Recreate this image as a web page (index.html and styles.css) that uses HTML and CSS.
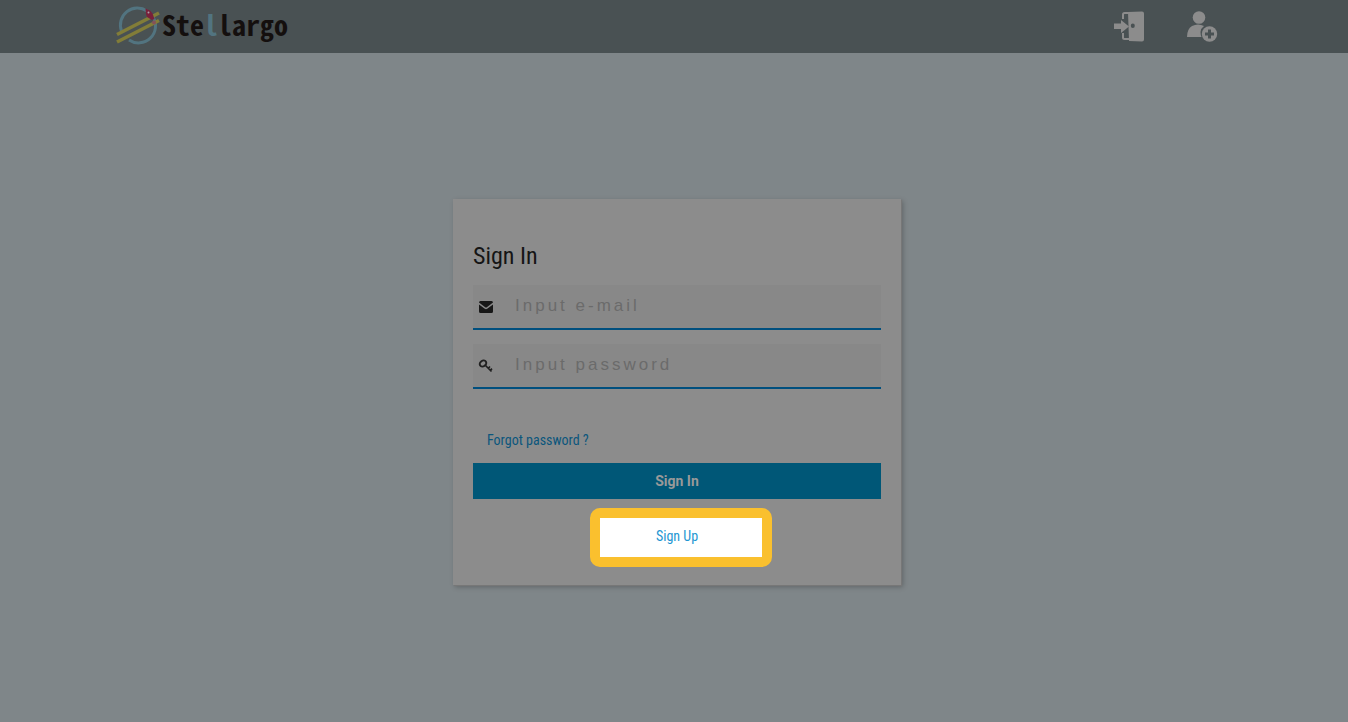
FILE: index.html
```html
<!DOCTYPE html>
<html lang="en">
<head>
<meta charset="utf-8">
<title>Stellargo - Sign In</title>
<link rel="stylesheet" href="styles.css">
</head>
<body>
<header class="topbar">
  <div class="topbar-inner">
    <a class="brand" href="#">
      <svg class="brand-mark" viewBox="0 0 46 40" aria-hidden="true">
        <path d="M5.500 25A17 17 0 0 1 31 5M37 11A17 17 0 0 1 13 34" fill="none" stroke="#527480" stroke-width="3"/>
        <path d="M1 28.500L43 7M1 36L43 14.500" stroke="#827d38" stroke-width="3.600"/>
        <path d="M29.500 2.500l4.500 2 2.500 3 2 5.500-2.500 1-5-3-1-3z" fill="#78203b"/>
        <circle cx="32.500" cy="6.500" r="1" fill="#aaa0a6"/>
        <circle cx="38" cy="16.500" r="2" fill="#84515a"/>
      </svg>
      <span class="brand-name">Ste<span class="brand-accent">l</span>largo</span>
    </a>
    <nav class="actions">
      <a class="action" href="#" aria-label="Sign in">
        <svg viewBox="0 0 32 32" aria-hidden="true">
          <path d="M16 3h-4.500q-1.500 0-1.500 1.500V9M10 23v4.500q0 1.500 1.500 1.500H16" fill="none" stroke="#8c8c8c" stroke-width="2"/>
          <path fill="#8c8c8c" fill-rule="evenodd" d="M15 2l14-.500q2 0 2 2v26q0 2-2 2L16 31zM19.800 13.500a2 2.300 0 1 0 0 4.600 2 2.300 0 1 0 0-4.600z"/>
          <path d="M1 13.500h7V10l8 6.500L8 23v-4H1z" fill="#8c8c8c"/>
        </svg>
      </a>
      <a class="action" href="#" aria-label="Sign up">
        <svg viewBox="0 0 32 32" aria-hidden="true">
          <circle cx="13" cy="7.500" r="6.300" fill="#8c8c8c"/>
          <path d="M1 27q0-8 5-11 6-3 12 0-3 2-3.500 6 0 3 1 5z" fill="#8c8c8c"/>
          <circle cx="23.500" cy="24" r="7.700" fill="#8c8c8c"/>
          <path d="M23.500 19.500v9M19 24h9" stroke="#495153" stroke-width="3"/>
        </svg>
      </a>
    </nav>
  </div>
</header>
<main class="page">
  <form class="card">
    <h1 class="title">Sign In</h1>
    <label class="field">
      <svg class="field-icon" viewBox="0 0 16 16" aria-hidden="true">
        <path d="M1 3.500Q1 2 2.500 2h11Q15 2 15 3.500L8.500 8.400q-.500.400-1 0zM1 5.500l5.800 4.300q1.200.900 2.400 0L15 5.500v7q0 1.500-1.500 1.500h-11Q1 14 1 12.500z" fill="#171717"/>
      </svg>
      <input class="input" type="email" placeholder="Input e-mail" aria-label="E-mail">
    </label>
    <label class="field">
      <svg class="field-icon" viewBox="0 0 16 16" aria-hidden="true">
        <g fill="none" stroke="#202020">
          <ellipse cx="5" cy="5.500" rx="3.500" ry="2.800" transform="rotate(-35 5 5.500)" stroke-width="1.900"/>
          <path d="M7.500 7.500L13.500 13.500M10 10.500l2-2M12 12.700l2-2" stroke-width="1.700"/>
        </g>
      </svg>
      <input class="input" type="password" placeholder="Input password" aria-label="Password">
    </label>
    <a class="link forgot" href="#">Forgot password ?</a>
    <button class="submit" type="button">Sign In</button>
    <div class="signup-row">
      <a class="link signup" href="#">Sign Up</a>
    </div>
  </form>
</main>
</body>
</html>
```
FILE: styles.css
```css
* { box-sizing: border-box; }

body {
  margin: 0;
  min-height: 100vh;
  display: flex;
  flex-direction: column;
  background: #7f8689;
  font-family: "Roboto Condensed", "Liberation Sans Narrow", "Roboto", sans-serif;
}

.topbar {
  background: #495153;
  padding: 0 16px;
}

.topbar-inner {
  display: flex;
  align-items: center;
  justify-content: space-between;
  max-width: 1116px;
  height: 53px;
  margin: 0 auto;
  padding: 0 14px 2px 0;
}

.brand {
  display: flex;
  align-items: center;
  color: #140f0e;
  text-decoration: none;
}

.brand-mark { width: 46px; height: 40px; }

.brand-name {
  padding-bottom: 4px;
  font: bold 28px/36px "Noto Sans Mono CJK JP", "DejaVu Sans Mono", monospace;
}

.brand-accent { color: #527480; }

.actions { display: flex; gap: 41px; }

.action, .action svg {
  display: block;
  width: 32px;
  height: 32px;
}

.page {
  flex: 1;
  display: flex;
  justify-content: center;
  align-items: flex-start;
  padding: 146px 16px 32px 22px;
}

.card {
  display: flex;
  flex-direction: column;
  width: 100%;
  max-width: 448px;
  padding: 41px 20px 18px;
  background: #8c8c8c;
  box-shadow: 1px 1px 1px #777777, 2px 2px 5px rgba(0, 0, 0, 0.25);
}

.title {
  margin: 0 0 13px;
  color: #151515;
  font-size: 24px;
  font-weight: 400;
  line-height: 32px;
}

.field {
  display: flex;
  align-items: center;
  height: 45px;
  margin-bottom: 14px;
  padding-left: 5px;
  background: #888888;
  border-bottom: 2px solid #004f7e;
}

.field-icon { width: 16px; height: 16px; flex: none; }

.input {
  flex: 1;
  min-width: 0;
  height: 40px;
  padding: 0 0 2px 21px;
  border: 0;
  outline: 0;
  background: transparent;
  color: #171717;
  font: 17px "Liberation Sans", Arial, sans-serif;
  letter-spacing: 3px;
}

.input::placeholder { color: #6b6b6b; opacity: 1; }

.link {
  color: #0b567c;
  font-size: 14px;
  line-height: 20px;
  text-decoration: none;
}

.forgot { align-self: flex-start; margin: 27px 14px 13px; }

.submit {
  height: 36px;
  border: 0;
  background: #005777;
  color: #999999;
  font: bold 14px "Roboto", sans-serif;
}

.signup-row {
  display: flex;
  justify-content: center;
  margin-top: 9px;
  padding-left: 8px;
}

.signup {
  width: 182px;
  height: 59px;
  padding: 8px 8px 0 0;
  border: 10px solid #fac02e;
  border-radius: 10px;
  background: #ffffff;
  color: #1e96d2;
  text-align: center;
}
```
